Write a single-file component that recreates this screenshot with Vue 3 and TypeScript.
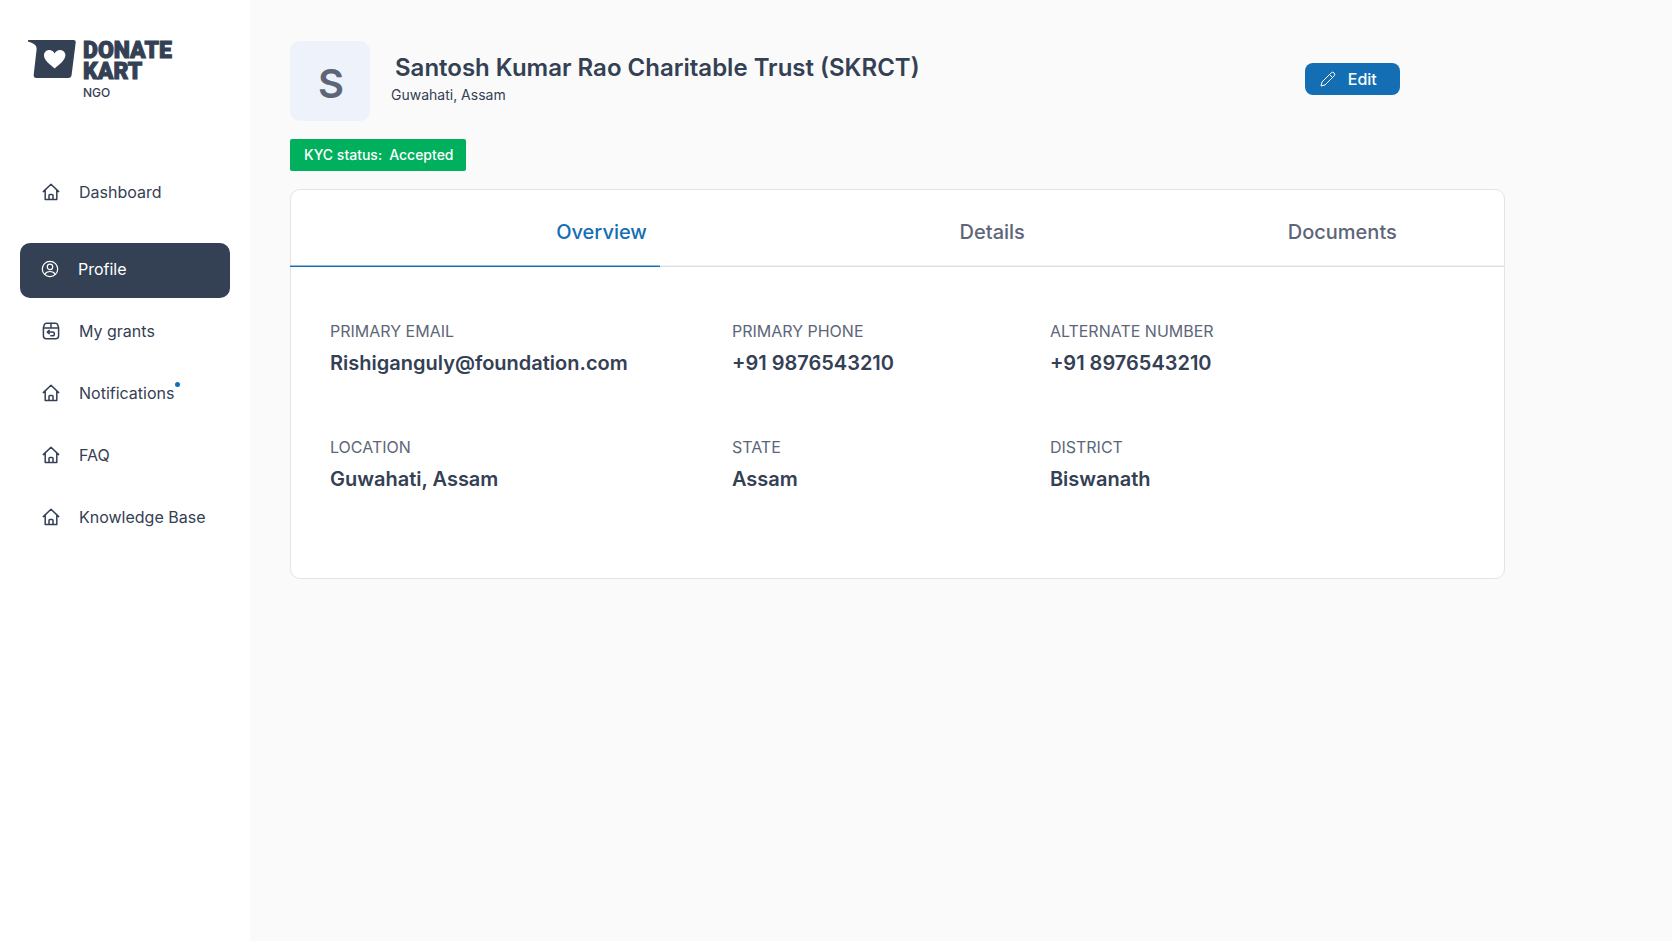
<script setup lang="ts">
import { ref } from 'vue'

type IconName = 'home' | 'user' | 'grant'

interface NavItem {
  label: string
  icon: IconName
  active?: boolean
  unread?: boolean
}

interface Field {
  label: string
  value: string
}

const navItems: NavItem[] = [
  { label: 'Dashboard', icon: 'home' },
  { label: 'Profile', icon: 'user', active: true },
  { label: 'My grants', icon: 'grant' },
  { label: 'Notifications', icon: 'home', unread: true },
  { label: 'FAQ', icon: 'home' },
  { label: 'Knowledge Base', icon: 'home' },
]

const tabs: string[] = ['Overview', 'Details', 'Documents']
const activeTab = ref<string>('Overview')

const fields: Field[] = [
  { label: 'PRIMARY EMAIL', value: 'Rishiganguly@foundation.com' },
  { label: 'PRIMARY PHONE', value: '+91 9876543210' },
  { label: 'ALTERNATE NUMBER', value: '+91 8976543210' },
  { label: 'LOCATION', value: 'Guwahati, Assam' },
  { label: 'STATE', value: 'Assam' },
  { label: 'DISTRICT', value: 'Biswanath' },
]
</script>

<template>
  <div class="layout">
    <aside class="sidebar">
      <a class="brand" href="#">
        <svg class="brand-mark" viewBox="0 0 48 38" aria-hidden="true">
          <path
            d="M0 0H45.5Q48 0 47.7 2.6L43.6 35Q43.2 38 40.2 38H8.6Q5.4 38 5.7 34.8L8.6 9.5Q8.9 6 6.2 4.2Q4 2.4 0 1.4Z"
            fill="#344054"
          />
          <path
            d="M26.8 28.4C23 25.2 16 20.6 16 15.4C16 12.2 18.4 10 21.2 10C23.6 10 25.6 11.3 26.6 13.5C27.7 11.3 29.7 10 32 10C35 10 37.6 12.4 37.4 15.6C37 20.8 30.4 25.2 26.8 28.4Z"
            fill="#fff"
          />
        </svg>
        <span class="brand-text">
          <span class="brand-name">DONATE</span>
          <span class="brand-name">KART</span>
          <span class="brand-sub">NGO</span>
        </span>
      </a>

      <nav class="nav">
        <a
          v-for="item in navItems"
          :key="item.label"
          href="#"
          class="nav-item"
          :class="{ active: item.active }"
        >
          <svg v-if="item.icon === 'home'" class="nav-icon" viewBox="0 0 18 18" aria-hidden="true">
            <path d="M1.3 8.6 9 1.3l7.7 7.3M3.2 7v9.6h11.6V7M7 16.6v-4.2q0-.9.9-.9h2.2q.9 0 .9.9v4.2" />
          </svg>
          <svg v-else-if="item.icon === 'user'" class="nav-icon" viewBox="0 0 18 18" aria-hidden="true">
            <circle cx="9" cy="9" r="7.7" />
            <circle cx="9" cy="6.9" r="2.7" />
            <path d="M3.8 14.4C4.8 12.3 6.7 11.5 9 11.5s4.2.8 5.2 2.9" />
          </svg>
          <svg v-else class="nav-icon" viewBox="0 0 18 18" aria-hidden="true">
            <path d="M1.4 5.7 2.3 2.8Q2.8 1.2 4.6 1.2h8.8q1.8 0 2.3 1.6l.9 2.9v8q0 3-3 3H4.4q-3 0-3-3zM1.4 5.9h15.2M9 1.2v4.7" />
            <path d="M7.2 8.4 5.3 10.1l1.9 1.7M5.5 10.1h5q1.9 0 1.9 1.8t-1.9 1.8H8.8" />
          </svg>
          <span class="nav-label">{{ item.label }}<span v-if="item.unread" class="dot"></span></span>
        </a>
      </nav>
    </aside>

    <main class="main">
      <header class="header">
        <div class="avatar">S</div>
        <div class="identity">
          <h1 class="title">Santosh Kumar Rao Charitable Trust (SKRCT)</h1>
          <p class="subtitle">Guwahati, Assam</p>
        </div>
        <button type="button" class="edit">
          <svg class="edit-icon" viewBox="0 0 16 16" aria-hidden="true">
            <path d="M1 15 2 11 11.3 1.7Q12.6.5 14 1.9T14.3 4.7L5 14ZM9.5 3.5l3 3" />
          </svg>
          Edit
        </button>
      </header>

      <div class="status"><span>KYC status:</span><span>Accepted</span></div>

      <section class="card">
        <div class="tabs" role="tablist">
          <button
            v-for="tab in tabs"
            :key="tab"
            type="button"
            role="tab"
            class="tab"
            :class="{ selected: tab === activeTab }"
            :aria-selected="tab === activeTab"
            @click="activeTab = tab"
          >
            {{ tab }}
          </button>
        </div>
        <dl class="fields">
          <div v-for="field in fields" :key="field.label" class="field">
            <dt>{{ field.label }}</dt>
            <dd>{{ field.value }}</dd>
          </div>
        </dl>
      </section>
    </main>
  </div>
</template>

<style>
body {
  background: #fafafa;
}
</style>

<style scoped>
.layout {
  display: flex;
  min-height: 100vh;
  font-family: Inter, "Liberation Sans", sans-serif;
  color: #344054;
}

.sidebar {
  box-sizing: border-box;
  flex: 0 0 250px;
  padding: 40px 20px;
  background: #fff;
}

.brand {
  display: flex;
  gap: 7px;
  height: 60px;
  padding-left: 8px;
  color: inherit;
  text-decoration: none;
}

.brand-mark {
  width: 48px;
  height: 38px;
}

.brand-text {
  display: flex;
  flex-direction: column;
}

.brand-name {
  font-family: Roboto, "Liberation Sans", sans-serif;
  font-size: 23px;
  font-weight: 900;
  line-height: 21px;
  -webkit-text-stroke: 1px currentColor;
}

.brand-sub {
  font-size: 12px;
  font-weight: 500;
  line-height: 22px;
}

.nav {
  display: flex;
  flex-direction: column;
  gap: 2px;
  margin-top: 62px;
}

.nav-item {
  display: flex;
  align-items: center;
  gap: 19px;
  height: 60px;
  padding: 0 22px;
  border-radius: 10px;
  font-size: 16px;
  line-height: 24px;
  color: inherit;
  text-decoration: none;
}

.nav-item.active {
  box-sizing: border-box;
  height: 55px;
  margin: 19px 0 1px;
  padding: 0 21px 3px;
  background: #344054;
  color: #fff;
}

.nav-icon {
  flex: none;
  width: 18px;
  height: 18px;
  fill: none;
  stroke: currentColor;
  stroke-width: 1.5;
  stroke-linecap: round;
  stroke-linejoin: round;
}

.nav-item.active .nav-icon {
  stroke-width: 1.2;
}

.nav-label {
  position: relative;
  white-space: nowrap;
}

.dot {
  position: absolute;
  top: 1px;
  right: -6px;
  width: 5px;
  height: 5px;
  border-radius: 50%;
  background: #146eb4;
}

.main {
  flex: 1;
  min-width: 0;
  padding: 41px 10% 41px 40px;
}

.header {
  display: flex;
  align-items: flex-start;
  padding-right: 105px;
}

.avatar {
  flex: none;
  box-sizing: border-box;
  width: 80px;
  height: 80px;
  padding: 4px 0 0 2px;
  border-radius: 10px;
  background: #edf2fb;
  color: #5d6679;
  font-size: 40px;
  font-weight: 600;
  line-height: 78px;
  text-align: center;
}

.identity {
  flex: 1;
  padding: 11px 20px 0 21px;
}

.title {
  margin: 0 0 0 4px;
  font-size: 24px;
  font-weight: 600;
  line-height: 32px;
}

.subtitle {
  margin: 1px 0 0;
  font-size: 14px;
  line-height: 20px;
}

.edit {
  display: flex;
  align-items: center;
  gap: 12px;
  height: 32px;
  margin-top: 22px;
  padding: 0 23px 0 15px;
  border: 0;
  border-radius: 8px;
  background: #146eb4;
  color: #fff;
  font-family: inherit;
  font-size: 16px;
  font-weight: 500;
}

.edit-icon {
  width: 16px;
  height: 16px;
  fill: none;
  stroke: currentColor;
  stroke-linejoin: round;
}

.status {
  display: flex;
  gap: 7px;
  width: fit-content;
  margin-top: 18px;
  padding: 0 12px 0 14px;
  border-radius: 2px;
  background: #00b05c;
  color: #fff;
  font-size: 14px;
  font-weight: 500;
  line-height: 32px;
}

.card {
  margin-top: 18px;
  border: 1px solid #e4e4e6;
  border-radius: 10px;
  background: #fff;
}

.tabs {
  display: grid;
  grid-template-columns: 370fr 378fr 372fr 95fr;
  margin: 0 -1px;
  border-bottom: 1px solid #e0e0e2;
  box-shadow: inset 0 -1px #f0f0f1;
}

.tab {
  height: 77px;
  margin-bottom: -1px;
  padding: 8px 13px 0 0;
  border: 0;
  border-bottom: 1px solid transparent;
  background: none;
  color: #5d6679;
  font-family: inherit;
  font-size: 20px;
  font-weight: 500;
  line-height: 24px;
  text-align: right;
}

.tab.selected {
  border-bottom-color: #146eb4;
  box-shadow: inset 0 -1px #8cbbdc;
  color: #146eb4;
}

.fields {
  display: grid;
  grid-template-columns: 402fr 318fr 415fr;
  row-gap: 58px;
  margin: 0;
  padding: 52px 39px 85px;
}

.field {
  display: flex;
  flex-direction: column;
  gap: 6px;
}

dt {
  font-size: 16px;
  line-height: 24px;
  color: #5d6679;
}

dd {
  margin: 0;
  font-size: 20px;
  font-weight: 600;
  line-height: 28px;
}
</style>
